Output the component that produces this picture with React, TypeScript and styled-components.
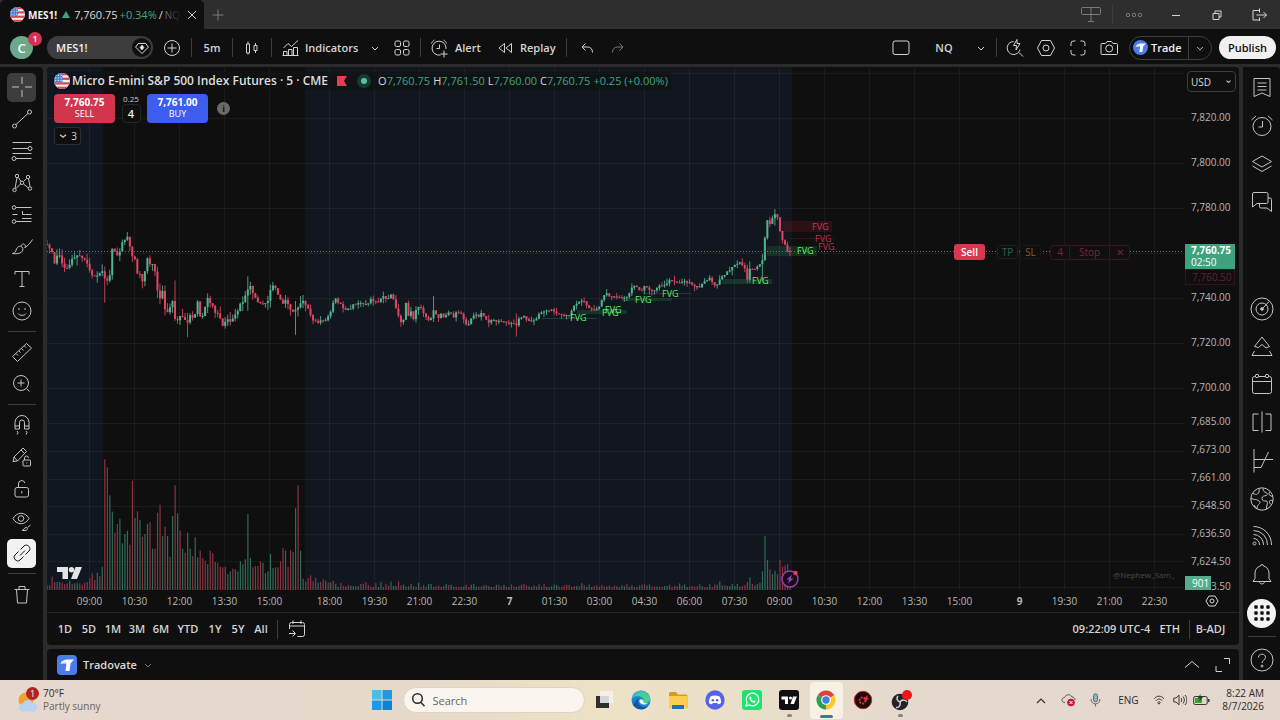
import React from 'react';
import styled, { createGlobalStyle } from 'styled-components';

const GlobalStyle = createGlobalStyle`
  *, *::before, *::after { box-sizing: border-box; }
  body { margin: 0; background: #0f0f0f; }
  button, input, select { font: inherit; color: inherit; margin: 0; }
`;

const UI_FONT = '"Open Sans", "Noto Sans", sans-serif';
const GREEN = '#42a582';

/* ---------- icons ---------- */

const GLYPHS: Record<string, React.ReactNode> = {
  cross: <path d="M2 12h7M15 12h7M12 2v7M12 15v7" />,
  trend: <><circle cx="4.5" cy="19" r="2" /><circle cx="19.5" cy="5" r="2" /><path d="M6 17.500 18 6.500" /></>,
  fib: <><path d="M2.500 3.500h19M2.500 9.500h15.500M2.500 14.500h19M6 19.500h15.500" /><circle cx="20" cy="9.500" r="2" /><circle cx="4" cy="19.500" r="2" /></>,
  pattern: <><path d="M5 17.500 7 6.500M8.500 6.500l2.500 4M13.500 10.500l3-3M18.500 7.500l1.500 8M10.500 13 6 17.500M13.500 13l5 4" /><circle cx="4.500" cy="19" r="1.700" /><circle cx="7" cy="5" r="1.700" /><circle cx="12" cy="11.800" r="1.700" /><circle cx="18" cy="6" r="1.700" /><circle cx="20" cy="17.500" r="1.700" /></>,
  position: <><path d="M6 4.500h15.500M2.500 11.500h5M15.500 11.500h6M12.500 8v3.500h3M6 18.500h15.500M12 15.500h9.500" /><circle cx="4" cy="4.500" r="1.800" /><circle cx="4" cy="18.500" r="1.800" /></>,
  brush: <><path d="M2.500 18.500c3-.5 3-2 4-4.500 1-2.500 3.500-3.500 5.500-2 1.500 1.500 1 4-1 5.500-2 1.200-5 1.500-8.500 1z" /><path d="M11 11c1-2 2-2.500 3.500-1.500s1 2.500 0 3.500M15 12.500c3-2 5.500-4.500 7.500-8" /></>,
  text: <path d="M5 7.500v-3h14v3M12 4.500v15M9.500 19.500h5" />,
  smile: <><circle cx="12" cy="12" r="9" /><path d="M8 14.500c1.800 2.500 6.200 2.500 8 0M9 9v2M15 9v2" /></>,
  ruler: <path d="M2.500 16.500 16.500 3.500l5 4.500-14 13.500zM6 13.500l2 2M9 11l1.500 1.500M11.500 8.500l2 2M14.500 6l1.500 1.500" />,
  zoomIn: <><circle cx="11" cy="11" r="7.500" /><path d="M16.500 16.500l3 3M7.500 11h7M11 7.500v7" /></>,
  magnet: <path d="M5 16V9.500a7 7 0 0 1 14 0V16h-4.500V9.500a2.500 2.500 0 0 0-5 0V16zM5 13h4.500M14.500 13H19M7 18l1 1.500-1 2M16 18l1 1.500-1 2" />,
  pencilLock: <><path d="M3 16.500l1-4.500L13 3l3.500 3.500-9 9.500zM4 12l3.500 4M11 5l3.500 3.500" /><rect x="13" y="15" width="7.500" height="6" rx="1" /><path d="M14.500 15v-2a2 2 0 0 1 4 0M16.800 17.500v1" /></>,
  lock: <><rect x="5" y="10.500" width="13.500" height="9.500" rx="2" /><path d="M8.500 10.500V7a3.200 3.200 0 0 1 6.300-1M11.800 14v2.500" /></>,
  eye: <><path d="M3 9.500c4-7 12-7 16 0-4 7-12 7-16 0z" /><circle cx="11" cy="9.500" r="2.800" /><path d="M12 21.500c2 0 2-3 4-3s2 3-1 3zM17.500 18.500l3-2.500" /></>,
  link: <path d="M10 14.500l5-5M10.500 8.500l3.500-3.500c3-3 8 2 5 5L15.500 13.500M13.500 15.500 10 19c-3 3-8-2-5-5l3.500-3.500" />,
  trash: <path d="M4.500 7.500h15M9 7V4.500h6V7M6.500 7.500l1 13.500h9l1-13.500" />,
  plusCircle: <><circle cx="12" cy="12" r="7.500" /><path d="M7.500 12h9M12 7.500v9" /></>,
  plus: <path d="M6.500 12h11M12 6.500v11" />,
  close: <path d="M8 8l8 8M16 8l-8 8" />,
  diamond: <><path d="M8 7h8l3 4L12 18 5 11z" /><path d="M12 9l2 2.500-2 2.500-2-2.500z" fill="currentColor" /></>,
  candles: <path d="M6.500 8h3v9h-3zM8 5.500V8M8 17v1.500M14 9.500h3v5h-3zM15.500 7v2.500M15.500 14.500V17" />,
  indicators: <path d="M4.500 12l4.500-4.500 3.500 3 6.500-6M4.500 19.500v-4h3.500v4zM9.500 19.500V13.500h3.500v6zM14.500 19.500v-8h4v8zM3.500 19.500h16" />,
  chevron: <path d="M9 11l3 3 3-3" />,
  caret: <path d="M5 9l7 6 7-6" />,
  chevronUp: <path d="M5 14.500l7-6 7 6" />,
  grid: <><rect x="5" y="5" width="5.500" height="5.500" rx="1.500" /><rect x="13.500" y="5" width="5.500" height="5.500" rx="1.500" /><rect x="5" y="13.500" width="5.500" height="5.500" rx="1.500" /><rect x="13.500" y="13.500" width="5.500" height="5.500" rx="1.500" /></>,
  alert: <><path d="M19 13a7 7 0 1 0-5.500 6M4.500 7.500c.5-1.500 1.500-2.500 3-3.500M19.500 7.500c-.5-1.500-1.500-2.500-3-3.500M12.500 8.500v4h-3M17 14.500v7M13.500 18h7" /></>,
  replay: <path d="M11.500 7.500v9L6 12zM18.500 7.500v9L13 12z" />,
  undo: <path d="M10.500 7.500 7 11l3.500 3.500M7 11h5.500c3 0 5 2 5 5.500" />,
  redo: <path d="M13.500 7.500 17 11l-3.500 3.500M17 11h-5.500c-3 0-5 2-5 5.500" />,
  square: <rect x="4" y="5" width="16" height="13.500" rx="2" />,
  quick: <><path d="M10.500 5.500a6.500 6.500 0 1 0 6.500 8M16 16.500l4 4" /><path d="M14 3.500l-3.500 6h3l-.5 4.500 4-6.500h-3z" /></>,
  gear: <><path d="M7.500 4.500h9L20.500 12l-4 7.500h-9L3.500 12z" /><circle cx="12" cy="12" r="3" /></>,
  gearSmall: <><path d="M9 7h6l3 5-3 5H9l-3-5z" /><circle cx="12" cy="12" r="2" /></>,
  fullscreen: <path d="M5 10V7.500A2.500 2.500 0 0 1 7.500 5H9.500M14.500 5h2A2.500 2.500 0 0 1 19 7.500V10M19 14v2.500a2.500 2.500 0 0 1-2.500 2.500h-2M9.500 19h-2A2.500 2.500 0 0 1 5 16.500V14" />,
  camera: <><path d="M5 7.500h3.500L10 5.500h4.500L16 7.500h3.500a1 1 0 0 1 1 1v9a1 1 0 0 1-1 1H5a1 1 0 0 1-1-1v-9a1 1 0 0 1 1-1z" /><circle cx="12.200" cy="12.500" r="3.500" /></>,
  watch: <path d="M4 2.500h16v18l-8-3.500-8 3.500zM7.500 7h9M7.500 10.500h9M7.500 14h9" />,
  clock: <><circle cx="12" cy="12.500" r="9" /><path d="M12.500 7v6h-4M1.500 6l4.500-4M22.500 6 18 2" /></>,
  layers: <path d="M12 4l9.500 5.500L12 15 2.500 9.500zM2.500 14 12 19.500 21.500 14" />,
  chat: <><path d="M4 2.500h12.500a1.500 1.500 0 0 1 1.500 1.500v8a1.500 1.500 0 0 1-1.500 1.500H7l-4.500 3.500V4A1.500 1.500 0 0 1 4 2.500z" /><path d="M18 8h2a1.500 1.500 0 0 1 1.500 1.500v12L17 18h-6a1.500 1.500 0 0 1-1.500-1.500v-3" /></>,
  target: <><circle cx="12" cy="12" r="11" /><circle cx="12" cy="12" r="6" /><circle cx="12" cy="12" r="1.300" fill="currentColor" /><path d="M12.500 11.500 19 4.500" /></>,
  peaks: <path d="M4.500 11.500 12 2l7.500 9.500-3.500 1.500-4-3.500-3.500 3zM4.500 16 2 20.500h20L19.500 16" />,
  calendar: <><rect x="2.500" y="3.500" width="19" height="17" rx="2" /><path d="M2.500 8.500h19" /><circle cx="7" cy="3" r="1.700" fill="#0f0f0f" /><circle cx="17" cy="3" r="1.700" fill="#0f0f0f" /></>,
  columns: <path d="M12 .5v21M8.500 3H3v16.500h5.500M15.500 3H21v16.500h-5.500" />,
  axis: <path d="M4 0v23.500M4 10.500h19M4 18.500h7L18.500 3" />,
  globe: <><circle cx="12" cy="12" r="11.200" /><path d="M3 6.500c2 .5 3 1.500 4.500.5s2-3 1.500-5.500M1 11.500l3.500 1c2-.5 2.500.5 4.500 1.500s1 2-.5 3.500-1 2-1.500 4.500L4 18M13 1.500c0 3 1.500 3.500 3 4s2 2.500 0 3-4 .5-4 3 2 2.500 4 2.500 1.500 2.500 1 4-.5 2.500-.5 4M20 5c-1.500 1-1.500 2.500 0 3.500l2.500 1M23 14c-2-1-3-1-3.500.5s1 2.500 1.500 3" /></>,
  feed: <><circle cx="4.500" cy="18.500" r="1.500" /><path d="M3.500 13.500a6 6 0 0 1 6 6.500M3.500 9.500a10 10 0 0 1 10 10.500M3.500 5.500a14 14 0 0 1 14 14.500M3.500 1.500A18 18 0 0 1 21.500 20" /></>,
  bell: <path d="M3 18.500h18l-2-3V10c0-4-3-6.500-5.500-7a1.500 1.500 0 0 0-3 0C8 3.500 5 6 5 10v5.500zM9.500 18.500c0 3.300 5 3.300 5 0" />,
  dots: <g fill="currentColor" stroke="none">{[6, 12, 18].map(y => [6, 12, 18].map(x => <rect key={`${x}-${y}`} x={x - 1.7} y={y - 1.7} width="3.400" height="3.400" rx=".8" />))}</g>,
  help: <><circle cx="12" cy="12" r="11" /><path d="M8.500 9.500c0-4.500 7-4.500 7 0 0 2.500-3.500 2.500-3.500 5.500" /><circle cx="12" cy="18" r="1" /></>,
  layout: <path d="M3.500 4.500h17a1 1 0 0 1 1 1v5a1 1 0 0 1-1 1h-17a1 1 0 0 1-1-1v-5a1 1 0 0 1 1-1zM12 4.500v14M9 18.500h6" />,
  more: <><circle cx="6" cy="12" r="1.700" /><circle cx="12" cy="12" r="1.700" /><circle cx="18" cy="12" r="1.700" /></>,
  minimise: <path d="M8 12.500h8" />,
  restore: <path d="M8 10.500h6v6H8zM10 10.500v-2.500h6v6h-2" />,
  exit: <path d="M12.500 7.500h-6.500v9.500h6.500M12.500 5.500v4M9.500 12h10M16.500 9l3 3-3 3M12.500 14.500v3.500" />,
  goto: <path d="M4.500 12V7.500a2 2 0 0 1 2-2h11a2 2 0 0 1 2 2v10a2 2 0 0 1-2 2h-5M4.500 9h15M8 3.500v3.500M16 3.500v3.500M4 16.500h6M7.500 13.500l3 3-3 3" />,
  expand: <path d="M15 5.500h5.500V11M7 13v5.500h6" />,
};

const Svg = styled.svg<{ $size: number; $weight: number }>`
  display: block;
  flex: none;
  width: ${p => p.$size}px;
  height: ${p => p.$size}px;
  fill: none;
  stroke: currentColor;
  stroke-width: ${p => p.$weight};
`;

const Icon = ({ name, size = 24, weight = 1 }: { name: string; size?: number; weight?: number }) => (
  <Svg $size={size} $weight={weight} viewBox="0 0 24 24" aria-hidden="true">{GLYPHS[name]}</Svg>
);

const UsFlag = ({ size }: { size: number }) => (
  <svg width={size} height={size} viewBox="0 0 18 18" aria-hidden="true">
    <defs><clipPath id={`flag${size}`}><circle cx="9" cy="9" r="9" /></clipPath></defs>
    <g clipPath={`url(#flag${size})`}>
      <rect width="18" height="18" fill="#eef0f4" />
      {[0, 5.2, 10.4, 15.4].map(y => <rect key={y} y={y} width="18" height="2.600" fill="#d7484f" />)}
      <rect width="9.500" height="10.400" fill="#3f7fd6" />
      {[2.5, 5.5, 8.5].map(y => [2, 5, 8].map(x => <circle key={`${x}${y}`} cx={x} cy={y} r=".8" fill="#dfe9fa" />))}
    </g>
  </svg>
);

const BrokerMark = ({ size, round }: { size: number; round?: boolean }) => (
  <svg width={size} height={size} viewBox="0 0 20 20" aria-hidden="true">
    <rect width="20" height="20" rx={round ? 10 : 4} fill="#4a7cec" />
    <path d="M3.500 8.500c1.500-3 4-4 7-4h6.500l-3.500 4-1 7.500H8.500l1-7.500z" fill="#fff" />
    <path d="M3.500 8.500l6-1.500M13.500 8.500l-1-1.500" stroke="#b9cdf8" strokeWidth=".8" />
  </svg>
);

/* ---------- shared pieces ---------- */

const Page = styled.div`
  display: flex;
  flex-direction: column;
  min-height: 100vh;
  background: #0f0f0f;
  color: #dbdbdb;
  font: 400 11px/16px ${UI_FONT};
`;

const PlainButton = styled.button<{ $w?: number; $dim?: boolean; $strong?: boolean }>`
  display: flex;
  align-items: center;
  justify-content: center;
  flex: none;
  width: ${p => (p.$w ? `${p.$w}px` : 'auto')};
  padding: 0;
  border: 0;
  background: none;
  color: ${p => (p.$dim ? '#7a7a7a' : '#d4d4d4')};
  font-weight: ${p => (p.$strong ? 600 : 400)};
  white-space: nowrap;
  cursor: pointer;
`;

const Rule = styled.span<{ $after?: number; $before?: number }>`
  flex: none;
  width: 1px;
  height: 19px;
  margin: 0 ${p => p.$after ?? 0}px 0 ${p => p.$before ?? 0}px;
  background: #3d3d3d;
`;

const Spacer = styled.span`
  flex: 1;
`;

/* ---------- title bar ---------- */

const TitleBar = styled.header`
  display: flex;
  align-items: center;
  height: 29px;
  background: #2e2e2e;
`;

const Tab = styled.div`
  display: flex;
  align-items: center;
  align-self: stretch;
  width: 204px;
  padding: 0 4px 0 10px;
  gap: 2px;
  background: #0f0f0f;
  border-radius: 5px 5px 0 0;
  white-space: nowrap;
`;

const TabTicker = styled.strong`
  margin-left: 1px;
  color: #f2f2f2;
  font-size: 10px;
  font-weight: 700;
`;

const Up = styled.span`
  color: ${GREEN};
`;

const Triangle = styled.span`
  margin: 0 2px 0 3px;
  border: 4px solid transparent;
  border-top: 0;
  border-bottom: 7px solid ${GREEN};
`;

const Fade = styled.span`
  flex: 1;
  color: #777;
  font-size: 10px;
  mask-image: linear-gradient(90deg, #000, transparent);
`;

/* ---------- toolbar ---------- */

const Toolbar = styled.nav`
  display: flex;
  align-items: center;
  height: 35px;
  padding: 2px 4px 0 10px;
  background: #0f0f0f;
`;

const Avatar = styled.button`
  position: relative;
  flex: none;
  width: 23px;
  height: 23px;
  margin-right: 14px;
  padding: 0;
  border: 0;
  border-radius: 50%;
  background: #6fa888;
  color: #fff;
  font: 600 13px/22px ${UI_FONT};
`;

const AvatarBadge = styled.span`
  position: absolute;
  top: -4px;
  left: 18px;
  width: 14px;
  height: 14px;
  border-radius: 50%;
  background: #d2344f;
  font-size: 9px;
  line-height: 14px;
`;

const SymbolPill = styled.button`
  display: flex;
  align-items: center;
  justify-content: space-between;
  flex: none;
  width: 106px;
  height: 23px;
  padding: 0 2px 0 9px;
  border: 0;
  border-radius: 12px;
  background: #3d3d3d;
  color: #f0f0f0;
  font-weight: 600;
`;

const PillDisc = styled.span`
  display: flex;
  align-items: center;
  justify-content: center;
  width: 19px;
  height: 19px;
  border-radius: 50%;
  background: #0f0f0f;
`;

const ToolButton = styled(PlainButton)<{ $gap: number; $pad: number }>`
  justify-content: flex-start;
  gap: ${p => p.$gap}px;
  padding-left: ${p => p.$pad}px;
  font-weight: 600;
`;

const TradeGroup = styled.div`
  display: flex;
  align-items: center;
  flex: none;
  width: 83px;
  height: 24px;
  margin: 0 7px 0 4px;
  border: 1px solid #3d3d3d;
  border-radius: 12px;
`;

const TradeButton = styled(PlainButton)`
  gap: 3px;
  height: 22px;
  padding: 0 6px 0 3px;
  border-right: 1px solid #3d3d3d;
  color: #f0f0f0;
  font-weight: 600;
`;

const Publish = styled.button`
  flex: none;
  width: 57px;
  height: 23px;
  padding: 0;
  border: 0;
  border-radius: 12px;
  background: #f0f0f0;
  color: #0f0f0f;
  font-weight: 600;
`;

/* ---------- workspace ---------- */

const Workspace = styled.div`
  display: grid;
  grid-template-columns: 43px minmax(0, 1fr) 37px;
  column-gap: 4px;
  flex: 1;
  padding-top: 3px;
  background: #2b2b2b;
`;

const Rail = styled.aside<{ $top: number }>`
  display: flex;
  flex-direction: column;
  align-items: center;
  padding: ${p => p.$top}px 0 1px;
  background: #0f0f0f;
  border-radius: 0 4px 0 0;
`;

const RailRule = styled.hr`
  width: 28px;
  height: 1px;
  margin: 4px 0;
  border: 0;
  background: #3d3d3d;
`;

const RailButton = styled.button<{ $h: number }>`
  display: flex;
  align-items: center;
  justify-content: center;
  width: 36px;
  height: ${p => p.$h}px;
  padding: 0;
  border: 0;
  background: none;
  color: #c4c4c4;
`;

const Chip = styled.span<{ $tone?: 'grey' | 'white' | 'disc' }>`
  display: flex;
  align-items: center;
  justify-content: center;
  width: 29px;
  height: 29px;
  border-radius: ${p => (p.$tone === 'disc' ? '50%' : '5px')};
  background: ${p => (p.$tone === 'grey' ? '#3d3d3d' : p.$tone ? '#f2f2f2' : 'none')};
  color: ${p => (p.$tone && p.$tone !== 'grey' ? '#0f0f0f' : 'inherit')};
`;

const Centre = styled.main`
  display: flex;
  flex-direction: column;
  gap: 4px;
  min-width: 0;
`;

const ChartPanel = styled.section`
  display: flex;
  flex-direction: column;
  flex: 1;
  background: #0f0f0f;
  border-radius: 4px;
  overflow: hidden;
`;

const PlotRow = styled.div`
  display: flex;
  flex: 1;
  min-height: 523px;
`;

const Plot = styled.div`
  position: relative;
  flex: 1;
  min-width: 0;
  overflow: hidden;
`;

const ChartSvg = styled.svg`
  position: absolute;
  inset: 0;
  width: 100%;
  height: 100%;
  font-family: ${UI_FONT};
`;

const Overlay = styled.div`
  position: relative;
  display: flex;
  flex-direction: column;
  align-items: flex-start;
  gap: 4px;
  padding: 5px 0 0 7px;
`;

const Legend = styled.div`
  display: flex;
  align-items: center;
  height: 18px;
  background: rgba(15, 18, 19, .7);
  white-space: nowrap;
`;

const LegendTitle = styled.h1`
  margin: 0 9px 0 2px;
  color: #dedede;
  font: 600 12px/18px ${UI_FONT};
`;

const LiveDot = styled.span`
  width: 6px;
  height: 6px;
  margin: 0 11px 0 14px;
  border-radius: 50%;
  background: #5cc3a2;
  box-shadow: 0 0 0 4px #123c30;
`;

const Quote = styled.span`
  margin-right: 3px;
  color: ${GREEN};
`;

const QuoteKey = styled.span`
  color: #d6d6d6;
`;

const Ticket = styled.div`
  display: flex;
  align-items: flex-start;
  height: 29px;
`;

const SideButton = styled.button<{ $tone: string }>`
  width: 61px;
  height: 29px;
  padding: 0 0 1px;
  border: 0;
  border-radius: 4px;
  background: ${p => p.$tone};
  color: #fff;
  font-size: 9px;
  line-height: 12px;
`;

const SidePrice = styled.strong`
  display: block;
  font-size: 10px;
  font-weight: 700;
`;

const Quantity = styled.label`
  display: flex;
  flex-direction: column;
  align-items: center;
  width: 32px;
  color: #c9c9c9;
  font-size: 8px;
  line-height: 9px;
`;

const QuantityInput = styled.input`
  width: 19px;
  height: 19px;
  margin-top: 1px;
  padding: 0;
  border: 1px solid #262626;
  border-radius: 4px;
  background: #0f0f0f;
  color: #eee;
  font-size: 11px;
  font-weight: 600;
  text-align: center;
`;

const Info = styled.span`
  align-self: center;
  width: 13px;
  height: 13px;
  margin-left: 9px;
  border-radius: 50%;
  background: #6a6a6a;
  color: #161616;
  font: 700 9px/13px ${UI_FONT};
  text-align: center;
`;

const Collapse = styled(PlainButton)`
  gap: 3px;
  width: 27px;
  height: 18px;
  border: 1px solid #2e2e2e;
  border-radius: 3px;
  background: #0f0f0f;
  font-size: 10px;
`;

const OrderLine = styled.div`
  position: absolute;
  top: 177px;
  left: 907px;
  display: flex;
  align-items: center;
  height: 16px;
  font-size: 10px;
  line-height: 12px;
`;

const SellTag = styled.button`
  width: 31px;
  height: 16px;
  margin-right: 12px;
  padding: 0;
  border: 0;
  border-radius: 3px;
  background: #d8384f;
  color: #fff;
  font-weight: 600;
`;

const Bracket = styled.button<{ $tone: string; $edge: string }>`
  width: 21px;
  height: 14px;
  margin-right: 2px;
  padding: 0;
  border: 1px solid ${p => p.$edge};
  border-radius: 3px;
  background: #0f0f0f;
  color: ${p => p.$tone};
`;

const StopBox = styled.div`
  display: flex;
  margin-left: 7px;
  height: 15px;
  border: 1px solid #3c151c;
  border-radius: 3px;
  background: #0f0f0f;
`;

const StopCell = styled.button<{ $w: number }>`
  width: ${p => p.$w}px;
  padding: 0;
  border: 0;
  border-left: 1px solid #3c151c;
  background: none;
  color: #7c2734;
  &:first-child { border-left: 0; }
`;

/* ---------- axes ---------- */

const PriceAxis = styled.div`
  display: flex;
  flex-direction: column;
  flex: none;
  width: 55px;
  height: 523px;
  color: #b8b8b8;
  font-size: 10px;
`;

const CurrencyBox = styled.label`
  position: relative;
  display: flex;
  align-items: center;
  justify-content: flex-end;
  flex: none;
  width: 49px;
  height: 21px;
  margin: 4px 0 4px 3px;
  padding-right: 3px;
  border: 1px solid #3d3d3d;
  border-radius: 4px;
`;

const CurrencySelect = styled.select`
  position: absolute;
  inset: 0;
  padding: 0 0 0 3px;
  border: 0;
  background: none;
  appearance: none;
  color: #dbdbdb;
`;

const PriceLabel = styled.span<{ $step: number }>`
  display: flex;
  align-items: flex-end;
  flex: none;
  height: ${p => p.$step}px;
  padding-left: 7px;
`;

const LastPrice = styled.div`
  flex: none;
  width: 50px;
  height: 25px;
  margin: 29px 0 0 1px;
  padding-left: 6px;
  background: #3fa27e;
  color: #fff;
  line-height: 12px;
`;

const OrderPrice = styled.div`
  flex: none;
  width: 50px;
  height: 16px;
  margin-left: 1px;
  padding-left: 6px;
  border: 1px solid #34141a;
  color: #66202c;
  line-height: 14px;
`;

const VolumeRow = styled.div`
  display: flex;
  align-items: flex-end;
  height: 14px;
  margin: auto 0 0 1px;
  line-height: 8px;
`;

const VolumeBadge = styled.span`
  width: 26px;
  padding-left: 7px;
  background: #55ab8d;
  color: #fff;
  line-height: 14px;
`;

const TimeAxis = styled.div`
  display: flex;
  align-items: center;
  height: 23px;
  padding: 0 0 0 20px;
  border-bottom: 1px solid #262626;
  color: #b8b8b8;
  font-size: 10px;
`;

const TimeLabel = styled.span<{ $lead: boolean; $day: boolean }>`
  flex: none;
  width: 45px;
  margin-left: ${p => (p.$lead ? 15 : 0)}px;
  font-weight: ${p => (p.$day ? 700 : 400)};
  text-align: center;
`;

const RangeBar = styled.div`
  display: flex;
  align-items: center;
  height: 32px;
  padding: 0 8px 0 6px;
`;

const RangeNote = styled(PlainButton)<{ $gap: number }>`
  margin-right: ${p => p.$gap}px;
  font-weight: 600;
`;

const BrokerBar = styled.section`
  display: flex;
  align-items: center;
  height: 31px;
  padding: 0 4px 0 10px;
  background: #0f0f0f;
  border-radius: 4px 4px 0 0;
`;

const BrokerName = styled.button`
  display: flex;
  align-items: center;
  gap: 6px;
  padding: 0;
  border: 0;
  background: none;
  font-weight: 600;
`;

/* ---------- taskbar ---------- */

const Taskbar = styled.footer`
  display: grid;
  grid-template-columns: 1fr auto 1fr;
  align-items: center;
  height: 40px;
  background: linear-gradient(90deg, #e6d8ce 0%, #e6d9cb 32%, #ede2c4 47%, #ebe0c8 55%, #e5d9ce 72%, #e4d7ce 100%);
  color: #2b2b2b;
  font: 400 10px/13px ${UI_FONT};
`;

const Weather = styled.button`
  display: flex;
  align-items: center;
  gap: 3px;
  padding: 0 0 0 17px;
  border: 0;
  background: none;
  text-align: left;
`;

const Muted = styled.span`
  display: block;
  color: #6b625c;
`;

const Apps = styled.div`
  display: flex;
  align-items: center;
  padding-left: 2px;
`;

const AppButton = styled.button<{ $active?: boolean }>`
  position: relative;
  display: flex;
  align-items: center;
  justify-content: center;
  width: ${p => (p.$active ? 33 : 37)}px;
  height: 37px;
  margin: 0 ${p => (p.$active ? 2 : 0)}px;
  padding: 0;
  border: 0;
  border-radius: 4px;
  background: ${p => (p.$active ? '#f6f1e2' : 'none')};
`;

const Running = styled.span<{ $active?: boolean }>`
  position: absolute;
  bottom: ${p => (p.$active ? 1 : 2)}px;
  width: ${p => (p.$active ? 13 : 5)}px;
  height: 3px;
  border-radius: 2px;
  background: ${p => (p.$active ? '#2f857f' : '#8a8377')};
`;

const SearchBox = styled.label`
  display: flex;
  align-items: center;
  gap: 7px;
  width: 182px;
  height: 26px;
  margin: 0 1px 0 2px;
  padding-left: 6px;
  border: 1px solid #ddd3c6;
  border-radius: 13px;
  background: #faf5ef;
`;

const SearchInput = styled.input`
  width: 130px;
  padding: 0;
  border: 0;
  outline: 0;
  background: none;
  font-size: 11px;
  &::placeholder { color: #6a6560; opacity: 1; }
`;

const Tray = styled.div`
  display: flex;
  align-items: center;
  justify-content: flex-end;
  padding-right: 16px;
`;

const TrayButton = styled.button<{ $w: number }>`
  display: flex;
  align-items: center;
  justify-content: center;
  width: ${p => p.$w}px;
  padding: 0;
  border: 0;
  background: none;
`;

const Clock = styled.div`
  margin-left: 10px;
  text-align: right;
`;

/* ---------- chart data (plot coordinates) ---------- */

const OX = 47;
const OY = 67;
const TIMES = ['09:00', '10:30', '12:00', '13:30', '15:00', '18:00', '19:30', '21:00', '22:30', '7', '01:30', '03:00', '04:30', '06:00', '07:30', '09:00', '10:30', '12:00', '13:30', '15:00', '9', '19:30', '21:00', '22:30'];
const leads = (i: number) => i === 5 || i === 20;

const PATH_A = [20,70,32,90,44,125,56,100,68,130,84,150,92,115,104,110,116,97,130,115,145,140,158,170,168,175,178,155,190,158,200,185,206,190,213,130,218,75,226,95,238,105,246,70,262,48,272,85,280,130,288,112,294,185,300,160,308,190,318,140,325,98,332,150,340,130,350,185,354,240,362,238,368,215,376,270,388,270,396,225,404,298,416,300,425,285,438,310,450,288,464,290,474,245,482,300,492,280,502,238,514,250,524,285,535,280,548,318,560,300,575,305,590,275,604,248,620,220,632,200,645,230,658,250,670,252,684,238,692,205,702,188,715,225,728,245,740,240,752,275,762,280,775,262];
const PATH_B = [8,85,22,110,35,150,50,155,68,153,85,140,98,105,106,88,120,98,134,118,148,118,162,105,178,100,195,106,210,90,228,96,240,90,252,80,262,92,272,75,282,95,292,135,302,155,310,150,316,92,326,145,334,120,340,145,350,115,362,108,375,140,388,155,395,140,403,110,412,155,420,125,430,145,442,130,450,125,460,145,470,125,482,127,494,150,502,172,512,155,518,132,532,140,548,130,562,155,580,150,596,152,612,157,632,160,648,165,662,140,676,142,692,155,706,150,720,130,735,120,755,120,770,132];
const PATH_C = [0,345,25,348,40,320,55,308,70,298,85,325,98,332,118,320,128,290,140,282,155,292,172,290,190,292,205,290,215,262,228,255,240,275,255,258,265,270,280,272,300,258,318,252,332,240,350,248,370,245,390,250,405,260,418,262,432,245,450,235,462,255,470,260,480,235,500,218,515,205,530,192,540,185,555,205,562,238,570,205,582,210,595,198,606,190,614,120,620,55,630,75,638,52,648,38,656,60,662,112,672,125,680,155,690,155];

const pairs = (list: number[], x0: number, y0: number) =>
  list.reduce<number[][]>((out, v, i) => {
    if (i % 2 === 0) out.push([x0 + v / 3 - OX, y0 + list[i + 1] / 3 - OY]);
    return out;
  }, []);

const CLOSES = [...pairs(PATH_A, 40, 220), ...pairs(PATH_B, 300, 270), ...pairs(PATH_C, 560, 200)];

const priceAt = (x: number) => {
  const i = CLOSES.findIndex(p => p[0] >= x);
  if (i <= 0) return CLOSES[i === 0 ? 0 : CLOSES.length - 1][1];
  const [ax, ay] = CLOSES[i - 1];
  const [bx, by] = CLOSES[i];
  return ay + ((by - ay) * (x - ax)) / (bx - ax);
};

const noise = (n: number) => {
  const v = Math.sin(n * 127.1 + 11.7) * 43758.5453;
  return v - Math.floor(v);
};

const STEP = 2.51;

/* Bars whose wick runs far beyond the body: bar index, high, low. */
const SPIKES: Record<number, [number, number]> = {
  23: [205, 231], 51: [214, 245], 56: [248, 266], 80: [215, 238], 99: [240, 261],
  154: [233, 250], 187: [248, 265], 280: [195, 214], 285: [190, 210], 290: [143, 155],
};

const CANDLES = Array.from({ length: 297 }, (_, i) => {
  const x = i * STEP;
  const swing = x < 260 ? 4.5 : x < 480 ? 3 : 1.8;
  const jitter = (k: number) => (noise(k) - 0.5) * swing;
  const open = priceAt(x - STEP) + jitter(i);
  const close = priceAt(x) + jitter(i + 1);
  const wick = x < 260 ? 8 : 5;
  const [top, foot] = SPIKES[i] ?? [999, 0];
  return {
    x,
    open,
    close,
    high: Math.min(open, close, top) - noise(i + 500) ** 2 * wick,
    low: Math.max(open, close, foot) + noise(i + 900) ** 2 * wick,
  };
});

/* Volume in thirds of a pixel; a negative value is a down bar. */
const VOL_OPEN = [-14, -15, -40, -24, 24, -24, -22, -18, -20, 28, -18, 20, 22, -20, -15, -22, -24, -35, -50, -30, 52, -42, 70,
  -392, -368, 284, 235, -172, -198, 214, 140, 168, 178, -136, -328, 216, -236, 210, -160, 168, 198, -204, 124, -124, -232, -256, 162, -190, 162, -100, 222, -314, 230, -178, 124, -112, 172, 124, -102, 158, 98, -118, -96, -88, 78, -118, -110, 84, -82, -70, -68, -70, 48, 56, -64, 62, 56, 86, 78, 92, 228, 96, -68, -72, -72, -86, 82, 50, 56, 108, 66, -68, -68, -86, -126, 118, -70, -120, 114, 246, -314, 118, 34, -26, -36, -44];
const VOL_CLOSE = [26, 14, -14, 12, 12, 18, 12, 18, 10, -12, -15, -24, 38, -18, 14, 18, 22, 56, 162, 90, -62, 48, 58, -48, -90, -70, -74, -78, -30];
const CLOSE_START = 297 - VOL_CLOSE.length;

const VOLUMES = Array.from({ length: 297 }, (_, i) => {
  if (i < VOL_OPEN.length) return VOL_OPEN[i];
  if (i >= CLOSE_START) return VOL_CLOSE[i - CLOSE_START];
  const lively = i < 150 ? 18 : i < 200 ? 10 : 12;
  const size = 9 + noise(i + 40) ** 2 * lively + (i < 115 ? 12 : 0);
  return noise(i + 77) > 0.5 ? size : -size;
});

const GRID_Y = [6, 51, 96, 141, 186, 231, 276, 321, 356, 384, 412, 439, 467, 494, 520];
const GRID_X = TIMES.map((_, i) => 42 + i * 45 + (i >= 5 ? 15 : 0) + (i >= 20 ? 15 : 0));

const ZONES: [number, number, number, number, string][] = [
  [736, 154, 49, 11, 'rgba(150,25,40,.22)'],
  [740, 171, 48, 1, 'rgba(150,25,40,.3)'],
  [720, 179, 50, 10, 'rgba(30,120,70,.28)'],
  [675, 212, 50, 5, 'rgba(30,120,70,.32)'],
  [596, 226, 48, 1, 'rgba(30,120,70,.4)'],
  [575, 231, 50, 3, 'rgba(30,120,70,.3)'],
  [530, 243, 50, 4, 'rgba(30,120,70,.3)'],
  [495, 251, 55, 1, 'rgba(30,120,70,.45)'],
];

const FVG: [number, number, string][] = [
  [523, 254, '#55f566'], [558, 246, '#55f566'], [555, 249, '#55f566'], [588, 236, '#55f566'], [615, 230, '#55f566'], [705, 217, '#55f566'], [750, 187, '#55f566'],
  [765, 163, '#cc3a50'], [768, 175, '#b8364a'], [771, 183, '#b8364a'],
];

const Chart = () => (
  <ChartSvg role="img" aria-label="MES1! five minute candlestick chart">
    <rect x="0" y="0" width="56" height="523" fill="#101720" />
    <rect x="258" y="0" width="487" height="523" fill="#12161f" />
    {GRID_Y.map(y => <rect key={y} x="0" y={y} width="100%" height="1" fill="#fff" opacity=".05" />)}
    {GRID_X.map(x => <rect key={x} x={x} y="0" width="1" height="523" fill="#fff" opacity=".05" />)}
    {VOLUMES.map((v, i) => (
      <rect key={i} x={i * STEP - 0.5} y={523 - Math.abs(v) / 3} width="1.200" height={Math.abs(v) / 3} fill={v > 0 ? '#2f6b58' : '#8a3440'} />
    ))}
    {ZONES.map(([x, y, w, h, fill]) => <rect key={`${x}-${y}`} x={x} y={y} width={w} height={h} fill={fill} />)}
    {CANDLES.map(c => {
      const tone = c.close < c.open ? '#53b391' : '#e04662';
      return (
        <g key={c.x} fill={tone}>
          <rect x={c.x - 0.5} y={c.high} width="1" height={c.low - c.high} opacity=".85" />
          <rect x={c.x - 1} y={Math.min(c.open, c.close)} width="2" height={Math.max(1, Math.abs(c.close - c.open))} />
        </g>
      );
    })}
    <line x1="0" x2="100%" y1="184.500" y2="184.500" stroke="#6d7472" strokeDasharray="1 2" />
    {FVG.map(([x, y, fill]) => <text key={`${x}-${y}`} x={x} y={y} fontSize="9" fill={fill}>FVG</text>)}
    <g transform="translate(10 500)" fill="#e4e4e4">
      <path d="M0 0h11v12H5.500V5H0z" />
      <circle cx="14.500" cy="2.700" r="2.700" />
      <path d="M18.500 0H25l-5 12h-6z" />
    </g>
    <text x="1066" y="511" fontSize="8" fill="#4a4a4a">@Nephew_Sam_</text>
    <g transform="translate(743 512)" fill="none">
      <circle r="8" fill="#131018" stroke="#9a3fb0" strokeWidth="1.500" />
      <path d="M2-4.500-3.500.5h2.500L-2 4.500 3.500-.5H.8z" fill="#9a3fb0" />
      <circle cx="5.500" cy="-6" r="2.200" fill="#e23d5b" />
    </g>
  </ChartSvg>
);

/* ---------- sections ---------- */

const LEFT_TOOLS: [string, string][][] = [
  [['cross', 'Cross'], ['trend', 'Trend line'], ['fib', 'Fib retracement'], ['pattern', 'Patterns'], ['position', 'Long position'], ['brush', 'Brush'], ['text', 'Text'], ['smile', 'Icons']],
  [['ruler', 'Measure'], ['zoomIn', 'Zoom in']],
  [['magnet', 'Magnet'], ['pencilLock', 'Stay in drawing mode'], ['lock', 'Lock drawings'], ['eye', 'Hide drawings'], ['link', 'Sync drawings']],
  [['trash', 'Remove']],
];

const LeftRail = () => (
  <Rail $top={4}>
    {LEFT_TOOLS.map((group, g) => (
      <React.Fragment key={g}>
        {g > 0 && <RailRule />}
        {group.map(([name, label]) => (
          <RailButton key={name} $h={32} aria-label={label}>
            <Chip $tone={name === 'cross' ? 'grey' : name === 'link' ? 'white' : undefined}><Icon name={name} /></Chip>
          </RailButton>
        ))}
      </React.Fragment>
    ))}
  </Rail>
);

const RailItem = ({ name, label }: { name: string; label: string }) => (
  <RailButton $h={38} aria-label={label}>
    {name === 'dots' ? <Chip $tone="disc"><Icon name="dots" /></Chip> : <Icon name={name} />}
  </RailButton>
);

const RightRail = () => (
  <Rail $top={2}>
    <RailItem name="watch" label="Watchlist" />
    <RailItem name="clock" label="Alerts" />
    <RailItem name="layers" label="Object tree" />
    <RailItem name="chat" label="Chats" />
    <Spacer />
    <RailItem name="target" label="Screeners" />
    <RailItem name="peaks" label="Pine" />
    <RailItem name="calendar" label="Calendars" />
    <RailItem name="columns" label="Depth of market" />
    <RailItem name="axis" label="Options" />
    <RailItem name="globe" label="Community" />
    <RailItem name="feed" label="Streams" />
    <RailItem name="bell" label="Notifications" />
    <RailItem name="dots" label="Products" />
    <RailRule />
    <RailItem name="help" label="Help" />
  </Rail>
);

const Prices = () => (
  <PriceAxis>
    <CurrencyBox>
      <CurrencySelect aria-label="Currency" defaultValue="USD"><option>USD</option></CurrencySelect>
      <Icon name="caret" size={7} weight={4} />
    </CurrencyBox>
    <PriceLabel $step={29}>7,820.00</PriceLabel>
    <PriceLabel $step={45}>7,800.00</PriceLabel>
    <PriceLabel $step={45}>7,780.00</PriceLabel>
    <LastPrice><strong>7,760.75</strong><br />02:50</LastPrice>
    <OrderPrice>7,760.50</OrderPrice>
    <PriceLabel $step={20}>7,740.00</PriceLabel>
    <PriceLabel $step={45}>7,720.00</PriceLabel>
    <PriceLabel $step={45}>7,700.00</PriceLabel>
    <PriceLabel $step={34}>7,685.00</PriceLabel>
    <PriceLabel $step={28}>7,673.00</PriceLabel>
    <PriceLabel $step={28}>7,661.00</PriceLabel>
    <PriceLabel $step={28}>7,648.50</PriceLabel>
    <PriceLabel $step={28}>7,636.50</PriceLabel>
    <PriceLabel $step={28}>7,624.50</PriceLabel>
    <VolumeRow><VolumeBadge>901</VolumeBadge>3.50</VolumeRow>
  </PriceAxis>
);

const APPS: { label: string; art: React.ReactNode; run?: boolean; active?: boolean }[] = [
  { label: 'Task view', art: <><rect x="2" y="6" width="13" height="12" fill="#2e2e2e" /><rect x="6" y="1" width="13" height="12" fill="#f2f2f2" opacity=".85" /></> },
  { label: 'Edge', art: <><circle cx="10" cy="10" r="9.500" fill="#1f83cc" /><path d="M1 8C3 1 12-1 17 4c3 3 3 7 0 8.500-2 1-5 .5-4.500-1C13.500 6 5 5 1 8z" fill="#46cf8f" /><path d="M1 8C3 1 10-.5 14 2 8 2 5 5 1 8z" fill="#35b8dc" /><path d="M7 11c0 5 5 7 9.500 5.500C13 21 5 20 2 15 4 12 5 9 9 8c-1.500.5-2 2-2 3z" fill="#1456a4" /><path d="M8.500 10c-.8 3 2.500 5 6 4.500l3-1.500c-2 .8-5 .3-5-1.500 0-2-3-3-4-1.500z" fill="#e9f6fb" /></> },
  { label: 'File Explorer', art: <><path d="M1 3.500A1.500 1.500 0 0 1 2.500 2H8l2 2.500h8A1.500 1.500 0 0 1 19.500 6v12H1z" fill="#d99a1c" /><path d="M1 6h18.500v12.500H1z" fill="#f9cf4e" /><path d="M4 15h12v4H4z" fill="#1c74bd" /></> },
  { label: 'Discord', art: <><circle cx="10" cy="10" r="9.700" fill="#5662e8" /><path d="M5.500 6.500C8 5.300 12 5.300 14.500 6.500c1.300 2 1.800 4.500 1.500 6.500-1 .8-2 1.200-3 1.300l-.7-1.200H7.700L7 14.300c-1-.1-2-.5-3-1.300-.3-2 .2-4.500 1.500-6.500z" fill="#fff" /><circle cx="7.800" cy="10.300" r="1.300" fill="#5662e8" /><circle cx="12.200" cy="10.300" r="1.300" fill="#5662e8" /></> },
  { label: 'WhatsApp', art: <><rect width="20" height="20" rx="3" fill="#1fe36c" /><path d="M4 16l1-3.500A6.300 6.300 0 1 1 7.500 15z" fill="none" stroke="#fff" strokeWidth="1.300" /><path d="M7.500 7c-.5 3 2.500 6 5.500 5.800l.8-1.500-1.800-1-.8.7C10 10.500 9.300 9.800 9 8.800l.7-.8-.8-1.500z" fill="#fff" /></> },
  { label: 'TradingView', run: true, art: <><rect width="20" height="20" rx="3" fill="#101010" /><path d="M2.500 6.500H9v7.500H6V9.500H2.500zM14 6.500h4L15 14h-3.500z" fill="#fff" /><circle cx="11.500" cy="8" r="1.500" fill="#fff" /></> },
  { label: 'Chrome', run: true, active: true, art: <><path d="M10 10 1.800 5.200A9.500 9.500 0 0 1 18.200 5.200z" fill="#dc4437" /><path d="M10 10 1.800 5.200A9.500 9.500 0 0 0 10 19.500z" fill="#2f9e54" /><path d="M10 10l8.200-4.800A9.500 9.500 0 0 1 10 19.500z" fill="#f9c72e" /><circle cx="10" cy="10" r="4.800" fill="#fff" /><circle cx="10" cy="10" r="3.700" fill="#3f7fe8" /></> },
  { label: 'Recorder', art: <><circle cx="10" cy="10" r="8.700" fill="#1a0b0d" stroke="#c5242c" /><circle cx="9.500" cy="10.500" r="3" fill="none" stroke="#dd2f38" strokeWidth="2" strokeDasharray="2 1" /><path d="M11 8.500l3.500-3.500v3h1.500l-3.500 4z" fill="#dd2f38" /></> },
  { label: 'OBS Studio', run: true, art: <><circle cx="10" cy="12" r="8.300" fill="#23242a" /><path d="M10 12c-3-1-4-4-2-6M10 12c2-3 6-2 7 0M10 12c1 3-1 6-4 5.500" fill="none" stroke="#d7d7d7" strokeWidth="1.500" /><circle cx="17" cy="5" r="5" fill="#f01616" /></> },
];

const App = () => (
  <Page>
    <GlobalStyle />
    <TitleBar>
      <Tab>
        <UsFlag size={15} />
        <TabTicker>MES1!</TabTicker>
        <Triangle />
        <span>7,760.75</span>
        <Up>+0.34%</Up>
        <span>/</span>
        <Fade>NQ</Fade>
        <PlainButton $w={16} aria-label="Close tab"><Icon name="close" /></PlainButton>
      </Tab>
      <PlainButton $w={28} $dim aria-label="New tab"><Icon name="plus" /></PlainButton>
      <Spacer />
      <PlainButton $w={42} $dim aria-label="Arrange windows"><Icon name="layout" /></PlainButton>
      <Rule />
      <PlainButton $w={42} $dim aria-label="More"><Icon name="more" /></PlainButton>
      <PlainButton $w={41} aria-label="Minimise"><Icon name="minimise" /></PlainButton>
      <PlainButton $w={42} aria-label="Restore"><Icon name="restore" /></PlainButton>
      <PlainButton $w={42} aria-label="Exit"><Icon name="exit" /></PlainButton>
    </TitleBar>

    <Toolbar>
      <Avatar aria-label="Account">C<AvatarBadge>1</AvatarBadge></Avatar>
      <SymbolPill>MES1!<PillDisc><Icon name="diamond" size={22} /></PillDisc></SymbolPill>
      <PlainButton $w={38} aria-label="Compare"><Icon name="plusCircle" /></PlainButton>
      <Rule />
      <PlainButton $w={40} $strong>5m</PlainButton>
      <Rule />
      <PlainButton $w={38} aria-label="Candles"><Icon name="candles" /></PlainButton>
      <Rule />
      <ToolButton $w={90} $gap={2} $pad={7}><Icon name="indicators" />Indicators</ToolButton>
      <PlainButton $w={26} aria-label="Favourite indicators"><Icon name="chevron" /></PlainButton>
      <PlainButton $w={28} aria-label="Templates"><Icon name="grid" /></PlainButton>
      <Rule $before={4} />
      <ToolButton $w={65} $gap={4} $pad={6}><Icon name="alert" />Alert</ToolButton>
      <ToolButton $w={80} $gap={3} $pad={7}><Icon name="replay" />Replay</ToolButton>
      <Rule />
      <PlainButton $w={40} aria-label="Undo"><Icon name="undo" /></PlainButton>
      <PlainButton $w={22} $dim aria-label="Redo"><Icon name="redo" /></PlainButton>
      <Spacer />
      <PlainButton $w={42} aria-label="Layout"><Icon name="square" /></PlainButton>
      <PlainButton $w={44} $strong>NQ</PlainButton>
      <PlainButton $w={30} aria-label="Manage layouts"><Icon name="chevron" /></PlainButton>
      <Rule $after={4} />
      <PlainButton $w={28} aria-label="Quick search"><Icon name="quick" /></PlainButton>
      <PlainButton $w={34} aria-label="Settings"><Icon name="gear" /></PlainButton>
      <PlainButton $w={30} aria-label="Fullscreen"><Icon name="fullscreen" /></PlainButton>
      <PlainButton $w={32} aria-label="Snapshot"><Icon name="camera" /></PlainButton>
      <TradeGroup>
        <TradeButton><BrokerMark size={15} round />Trade</TradeButton>
        <PlainButton $w={22} aria-label="Trade options"><Icon name="chevron" size={22} /></PlainButton>
      </TradeGroup>
      <Publish>Publish</Publish>
    </Toolbar>

    <Workspace>
      <LeftRail />
      <Centre>
        <ChartPanel>
          <PlotRow>
            <Plot>
              <Chart />
              <Overlay>
                <Legend>
                  <UsFlag size={16} />
                  <LegendTitle>Micro E-mini S&amp;P 500 Index Futures · 5 · CME</LegendTitle>
                  <svg width="10" height="10" viewBox="0 0 10 10" aria-hidden="true"><path d="M0 0h10L7 5l3 5H0z" fill="#e0404f" /></svg>
                  <LiveDot />
                  <Quote><QuoteKey>O</QuoteKey>7,760.75</Quote>
                  <Quote><QuoteKey>H</QuoteKey>7,761.50</Quote>
                  <Quote><QuoteKey>L</QuoteKey>7,760.00</Quote>
                  <Quote><QuoteKey>C</QuoteKey>7,760.75</Quote>
                  <Quote>+0.25 (+0.00%)</Quote>
                </Legend>
                <Ticket>
                  <SideButton $tone="#d2364f"><SidePrice>7,760.75</SidePrice>SELL</SideButton>
                  <Quantity>0.25<QuantityInput defaultValue="4" /></Quantity>
                  <SideButton $tone="#3d5cf0"><SidePrice>7,761.00</SidePrice>BUY</SideButton>
                  <Info>i</Info>
                </Ticket>
                <Collapse><Icon name="caret" size={10} weight={3} />3</Collapse>
              </Overlay>
              <OrderLine>
                <SellTag>Sell</SellTag>
                <Bracket $tone="#2a6350" $edge="#14261f">TP</Bracket>
                <Bracket $tone="#80602a" $edge="#1d1a14">SL</Bracket>
                <StopBox>
                  <StopCell $w={18}>4</StopCell>
                  <StopCell $w={40}>Stop</StopCell>
                  <StopCell $w={20} aria-label="Cancel order">✕</StopCell>
                </StopBox>
              </OrderLine>
            </Plot>
            <Prices />
          </PlotRow>
          <TimeAxis>
            {TIMES.map((t, i) => <TimeLabel key={i} $lead={leads(i)} $day={t.length === 1}>{t}</TimeLabel>)}
            <Spacer />
            <PlainButton $w={54} aria-label="Axis settings"><Icon name="gearSmall" /></PlainButton>
          </TimeAxis>
          <RangeBar>
            {['1D', '5D', '1M', '3M', '6M'].map(r => <PlainButton key={r} $w={24} $strong>{r}</PlainButton>)}
            <PlainButton $w={30} $strong>YTD</PlainButton>
            <PlainButton $w={24} $strong>1Y</PlainButton>
            <PlainButton $w={22} $strong>5Y</PlainButton>
            <PlainButton $w={24} $strong>All</PlainButton>
            <Rule $before={4} />
            <PlainButton $w={38} aria-label="Go to date"><Icon name="goto" /></PlainButton>
            <Spacer />
            <RangeNote $gap={9}>09:22:09 UTC-4</RangeNote>
            <RangeNote $gap={9}>ETH</RangeNote>
            <Rule />
            <RangeNote $gap={0} $w={41}>B-ADJ</RangeNote>
          </RangeBar>
        </ChartPanel>
        <BrokerBar>
          <BrokerName><BrokerMark size={20} />Tradovate</BrokerName>
          <PlainButton $w={22} $dim aria-label="Choose broker"><Icon name="chevron" /></PlainButton>
          <Spacer />
          <PlainButton $w={30} aria-label="Open panel"><Icon name="chevronUp" /></PlainButton>
          <PlainButton $w={28} aria-label="Maximise panel"><Icon name="expand" /></PlainButton>
        </BrokerBar>
      </Centre>
      <RightRail />
    </Workspace>

    <Taskbar>
      <Weather>
        <svg width="23" height="26" viewBox="0 0 23 26" aria-hidden="true">
          <circle cx="9" cy="13" r="7.500" fill="#f0a32c" />
          <path d="M6 24.500a4 4 0 0 1 0-8c1-4 7-5 9-1 4 0 6 2.500 5 6-.5 2-2 3-4 3z" fill="#b9d3f2" />
          <circle cx="15.500" cy="6.500" r="6.500" fill="#b3231f" />
          <text x="13" y="10" fontSize="9" fill="#fff">1</text>
        </svg>
        <span>70°F<Muted>Partly sunny</Muted></span>
      </Weather>
      <Apps>
        <AppButton aria-label="Start">
          <svg width="20" height="20" viewBox="0 0 20 20" fill="#1f9ae0" aria-hidden="true">
            <path d="M0 0h9.500v9.500H0z" fill="#45c0ee" /><path d="M10.500 0H20v9.500h-9.500zM0 10.500h9.500V20H0z" /><path d="M10.500 10.500H20V20h-9.500z" fill="#1182d2" />
          </svg>
        </AppButton>
        <SearchBox>
          <svg width="16" height="16" viewBox="0 0 16 16" fill="none" stroke="#2b2b2b" strokeWidth="1.500" aria-hidden="true"><circle cx="7.500" cy="6.500" r="4.800" /><path d="M11 10.500l3.500 3.800" /></svg>
          <SearchInput aria-label="Search" placeholder="Search" />
        </SearchBox>
        {APPS.map(a => (
          <AppButton key={a.label} $active={a.active} aria-label={a.label}>
            <svg width="20" height="20" viewBox="0 0 20 20" overflow="visible" aria-hidden="true">{a.art}</svg>
            {a.run && <Running $active={a.active} />}
          </AppButton>
        ))}
      </Apps>
      <Tray>
        <TrayButton $w={26} aria-label="Hidden icons"><svg width="10" height="7" viewBox="0 0 10 7" fill="none" stroke="#333" strokeWidth="1.200"><path d="M1 6l4-4 4 4" /></svg></TrayButton>
        <TrayButton $w={28} aria-label="OneDrive">
          <svg width="15" height="14" viewBox="0 0 15 14" fill="none" stroke="#55504b"><path d="M4 9.500C0 9.500 0 5 3.500 4.500 5 1 10 1 11 4c2 0 3 1.500 3 3" /><circle cx="10" cy="9.500" r="3.800" fill="#c8173b" stroke="none" /><path d="M8.500 8l3 3M11.500 8l-3 3" stroke="#fff" /></svg>
        </TrayButton>
        <TrayButton $w={26} aria-label="Microphone">
          <svg width="11" height="14" viewBox="0 0 11 14" fill="none" stroke="#6b6762"><rect x="3.500" y=".8" width="4" height="8" rx="2" fill="#8fb8c4" /><path d="M1 6c0 6.500 9 6.500 9 0M5.500 11v2.500" /></svg>
        </TrayButton>
        <TrayButton $w={40}>ENG</TrayButton>
        <TrayButton $w={22} aria-label="Wi-Fi">
          <svg width="12" height="10" viewBox="0 0 12 10" fill="none" stroke="#3c3835"><path d="M1 3.800c3-3.500 7-3.500 10 0M2.800 5.800c2-2.300 4.500-2.300 6.500 0M4.500 7.500c1-1 2-1 3 0" /><circle cx="6" cy="8.500" r=".6" fill="#3c3835" /></svg>
        </TrayButton>
        <TrayButton $w={20} aria-label="Volume">
          <svg width="14" height="12" viewBox="0 0 14 12" fill="none" stroke="#3c3835"><path d="M.8 4h2.200L6 1.200v9.600L3 8H.8zM8 4c1 1.200 1 2.800 0 4M10 2.500c1.800 2 1.800 5 0 7M12 1c2.500 3 2.500 7 0 10" /></svg>
        </TrayButton>
        <TrayButton $w={22} aria-label="Battery">
          <svg width="17" height="12" viewBox="0 0 17 12"><rect x=".7" y="2.500" width="13.500" height="8" rx="1.500" fill="none" stroke="#2c3a2c" /><rect x="2" y="4" width="7" height="5" fill="#39a52d" /><rect x="15" y="5" width="1.500" height="3" fill="#2c3a2c" /><path d="M7.500 0 4.500 4.500h2.500L6 8l4-5H7.500z" fill="#1f4a1d" /></svg>
        </TrayButton>
        <Clock>8:22 AM<br />8/7/2026</Clock>
      </Tray>
    </Taskbar>
  </Page>
);

export default App;
